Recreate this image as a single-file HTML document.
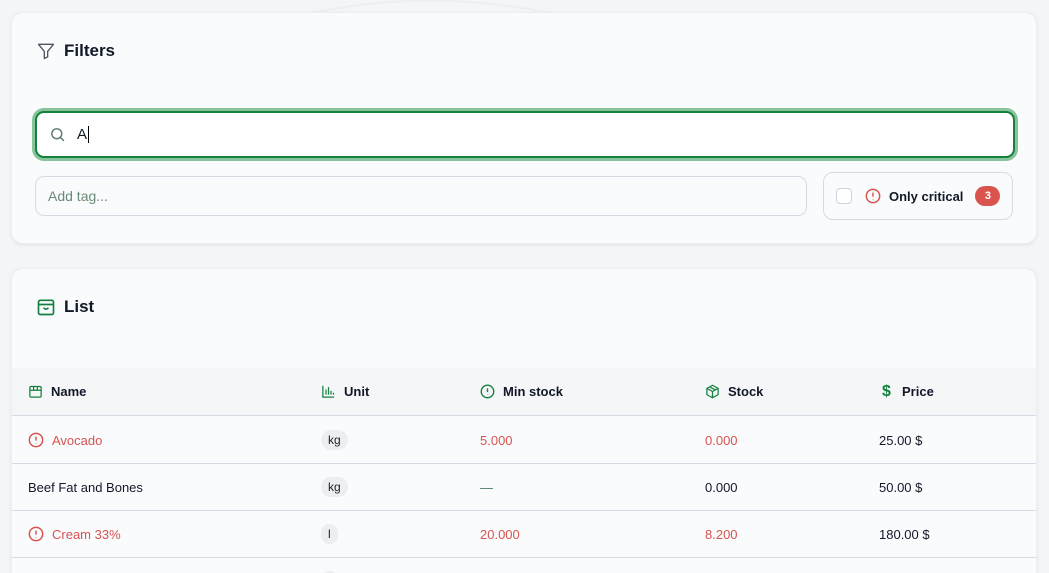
<!DOCTYPE html>
<html><head><meta charset="utf-8"><style>
*{box-sizing:border-box;margin:0;padding:0}
html,body{width:1049px;height:573px;overflow:hidden}
body{background:#f3f5f6;font-family:"Liberation Sans",sans-serif;color:#111827}
#w{position:relative;width:1049px;height:573px;overflow:hidden}
.card{position:absolute;left:11px;width:1026px;background:#fafbfc;border-radius:12px;box-shadow:0 1px 3px rgba(0,0,0,.08);border:1px solid #eceff2}
.title{position:absolute;left:24px;font-size:17px;font-weight:bold;display:flex;align-items:center;gap:8px}
.search{position:absolute;left:23px;top:98px;width:980px;height:47px;border:2px solid #15803d;border-radius:9px;box-shadow:0 0 0 3px #86c59c;background:#fff}
.tag{position:absolute;left:23px;top:163px;width:772px;height:40px;border:1px solid #d3dce6;border-radius:9px;font-size:14px;color:#6b8a78;padding:11px 12px}
.crit{position:absolute;left:811px;top:159px;width:190px;height:48px;border:1px solid #d3dce6;border-radius:10px;display:flex;align-items:center;font-size:13px;font-weight:bold}
.th{position:absolute;left:0;top:99px;width:1024px;height:48px;background:#f4f6f8;border-bottom:1px solid #d3dce6}
.row{position:absolute;left:0;width:1024px;height:47px;border-bottom:1px solid #d3dce6;font-size:13px}
.c{position:absolute;top:0;height:100%;display:flex;align-items:center;gap:8px}
.red{color:#d9534f}
.pill{background:#eceef1;border-radius:10px;padding:3px 7px;font-size:12px;color:#222}
.h{font-weight:bold;font-size:13px}
</style></head><body><div id="w">
<svg style="position:absolute;left:0;top:0" width="1049" height="573"><path d="M250 30 Q400 -20 560 15" stroke="#eceef0" fill="none" stroke-width="2"/></svg>
<div class="card" style="top:12px;height:232px">
 <div class="title" style="top:28px">
  <svg width="20" height="20" viewBox="0 0 24 24" fill="none" stroke="#4b5563" stroke-width="1.6" stroke-linejoin="round"><path d="M3 4h18l-7 8.5V19l-4 2v-8.5z"/></svg>Filters</div>
 <div class="search">
  <svg style="position:absolute;left:12px;top:13px" width="17" height="17" viewBox="0 0 24 24" fill="none" stroke="#5b7b6a" stroke-width="2"><circle cx="11" cy="11" r="7"/><path d="M16 16l5 5"/></svg>
  <span style="position:absolute;left:40px;top:13px;font-size:15px">A<span style="border-left:1px solid #000;margin-left:1px"></span></span>
 </div>
 <div class="tag">Add tag...</div>
 <div class="crit">
  <span style="width:16px;height:16px;border:1px solid #cfd6de;border-radius:4px;margin-left:12px;background:#fff"></span>
  <svg style="margin-left:13px" width="16" height="16" viewBox="0 0 24 24" fill="none" stroke="#d9534f" stroke-width="2.2"><circle cx="12" cy="12" r="10"/><path d="M12 7v6M12 16.5v.5"/></svg>
  <span style="margin-left:8px">Only critical</span>
  <span style="margin-left:12px;background:#d9534f;color:#fff;border-radius:10px;width:25px;height:20px;font-size:11px;display:flex;align-items:center;justify-content:center">3</span>
 </div>
</div>
<div class="card" style="top:268px;height:400px">
 <div class="title" style="top:28px">
  <svg width="20" height="20" viewBox="0 0 24 24" fill="none" stroke="#15803d" stroke-width="2" stroke-linejoin="round"><rect x="3" y="4" width="18" height="17" rx="2"/><path d="M3 9h18M9 13q3 3 6 0"/></svg>List</div>
 <div class="th">
  <div class="c h" style="left:16px"><svg width="15" height="15" viewBox="0 0 24 24" fill="none" stroke="#15803d" stroke-width="2"><rect x="3" y="4" width="18" height="17" rx="2"/><path d="M3 10h18M9 4v6M15 4v6"/></svg>Name</div>
  <div class="c h" style="left:309px"><svg width="15" height="15" viewBox="0 0 24 24" fill="none" stroke="#15803d" stroke-width="2"><path d="M3 3v18h18M8 17V9M12 17V5M16 17v-6M20 17v-3"/></svg>Unit</div>
  <div class="c h" style="left:468px"><svg width="15" height="15" viewBox="0 0 24 24" fill="none" stroke="#15803d" stroke-width="2.2"><circle cx="12" cy="12" r="10"/><path d="M12 7v6M12 16.5v.5"/></svg>Min stock</div>
  <div class="c h" style="left:693px"><svg width="15" height="15" viewBox="0 0 24 24" fill="none" stroke="#15803d" stroke-width="2" stroke-linejoin="round"><path d="M12 2l9 5v10l-9 5-9-5V7z M3 7l9 5 9-5M12 12v10M7.5 4.5l9 5"/></svg>Stock</div>
  <div class="c h" style="left:867px"><span style="color:#15803d;font-size:16px;width:15px;text-align:center">$</span>Price</div>
 </div>
 <div class="row" style="top:148px">
  <div class="c red" style="left:16px"><svg width="16" height="16" viewBox="0 0 24 24" fill="none" stroke="#d9534f" stroke-width="2.2"><circle cx="12" cy="12" r="10"/><path d="M12 7v6M12 16.5v.5"/></svg>Avocado</div>
  <div class="c" style="left:309px"><span class="pill">kg</span></div>
  <div class="c red" style="left:468px">5.000</div>
  <div class="c red" style="left:693px">0.000</div>
  <div class="c" style="left:867px">25.00 $</div>
 </div>
 <div class="row" style="top:195px">
  <div class="c" style="left:16px">Beef Fat and Bones</div>
  <div class="c" style="left:309px"><span class="pill">kg</span></div>
  <div class="c" style="left:468px;color:#4b7a64">—</div>
  <div class="c" style="left:693px">0.000</div>
  <div class="c" style="left:867px">50.00 $</div>
 </div>
 <div class="row" style="top:242px">
  <div class="c red" style="left:16px"><svg width="16" height="16" viewBox="0 0 24 24" fill="none" stroke="#d9534f" stroke-width="2.2"><circle cx="12" cy="12" r="10"/><path d="M12 7v6M12 16.5v.5"/></svg>Cream 33%</div>
  <div class="c" style="left:309px"><span class="pill">l</span></div>
  <div class="c red" style="left:468px">20.000</div>
  <div class="c red" style="left:693px">8.200</div>
  <div class="c" style="left:867px">180.00 $</div>
 </div>
 <div class="row" style="top:289px">
  <div class="c" style="left:16px">Milk</div>
  <div class="c" style="left:309px"><span class="pill">l</span></div>
  <div class="c" style="left:468px">—</div>
  <div class="c" style="left:693px">0.000</div>
  <div class="c" style="left:867px">60.00 $</div>
 </div>
</div>
</div></body></html>
